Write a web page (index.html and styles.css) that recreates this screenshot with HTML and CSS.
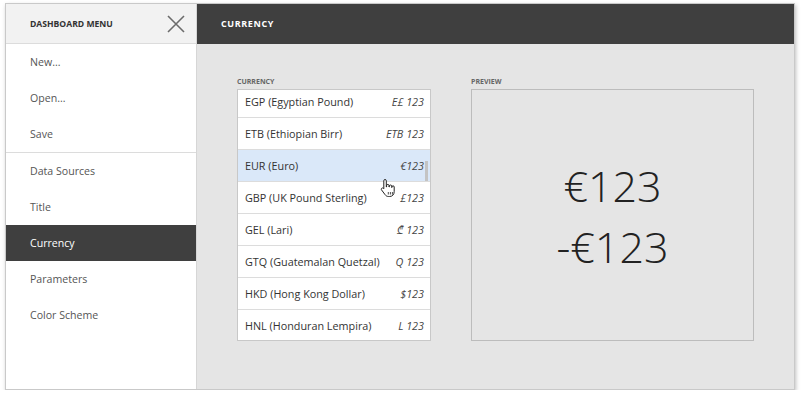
FILE: index.html
```html
<!DOCTYPE html>
<html>
<head>
<meta charset="utf-8">
<link rel="stylesheet" href="styles.css">
</head>
<body>
<div class="window">
  <aside class="sidebar">
    <div class="side-head">
      <span class="side-title">DASHBOARD MENU</span>
      <svg class="close" width="18" height="18" viewBox="0 0 18 18"><path d="M1 1L17 17M17 1L1 17" stroke="#6b6b6b" stroke-width="1.6" fill="none"/></svg>
    </div>
    <div class="group">
      <div class="item">New...</div>
      <div class="item">Open...</div>
      <div class="item">Save</div>
    </div>
    <div class="group">
      <div class="item">Data Sources</div>
      <div class="item">Title</div>
      <div class="item active">Currency</div>
      <div class="item">Parameters</div>
      <div class="item">Color Scheme</div>
    </div>
  </aside>
  <main class="main">
    <div class="main-head">CURRENCY</div>
    <div class="content">
      <section class="col">
        <div class="label">CURRENCY</div>
        <div class="listbox">
          <div class="rows">
            <div class="row"><span>EGP (Egyptian Pound)</span><i>E£ 123</i></div>
            <div class="row"><span>ETB (Ethiopian Birr)</span><i>ETB 123</i></div>
            <div class="row sel"><span>EUR (Euro)</span><i>€123</i></div>
            <div class="row"><span>GBP (UK Pound Sterling)</span><i>£123</i></div>
            <div class="row"><span>GEL (Lari)</span><i>₾ 123</i></div>
            <div class="row"><span>GTQ (Guatemalan Quetzal)</span><i>Q 123</i></div>
            <div class="row"><span>HKD (Hong Kong Dollar)</span><i>$123</i></div>
            <div class="row"><span>HNL (Honduran Lempira)</span><i>L 123</i></div>
          </div>
          <div class="thumb"></div>
          <svg class="cursor" width="16" height="20" viewBox="0 0 16 20"><path d="M5 1.5c.8 0 1.3.5 1.3 1.3V9h.3V7.6c0-.8.5-1.2 1.2-1.2s1.2.4 1.2 1.2V9h.3V8.2c0-.8.5-1.2 1.2-1.2s1.2.4 1.2 1.2V9.5h.2V9c0-.8.5-1.2 1.1-1.2.7 0 1.2.4 1.2 1.2v4.6c0 2.8-1.8 4.9-4.6 4.9H8.6c-1.6 0-2.600-.6-3.5-1.8L1.6 12c-.5-.6-.4-1.4.2-1.8.6-.4 1.3-.3 1.8.3l.2.3V2.8c0-.8.5-1.3 1.2-1.3z" fill="#fff" stroke="#222" stroke-width="1"/><path d="M8.3 14v2.5M10.4 14v2.5M12.4 14v2.5" stroke="#222" stroke-width=".8"/></svg>
        </div>
      </section>
      <section class="col">
        <div class="label">PREVIEW</div>
        <div class="preview">
          <div>€123</div>
          <div>-€123</div>
        </div>
      </section>
    </div>
  </main>
</div>
</body>
</html>
```
FILE: styles.css
```css
* { box-sizing: border-box; }
html, body { margin: 0; padding: 0; background: #fff; }
body { font-family: "Open Sans", "Noto Sans", sans-serif; }
.window {
  margin: 3px 0 0 5px;
  width: 790px;
  height: 387px;
  border: 1px solid #c9c9c9;
  box-shadow: 1px 2px 4px rgba(0,0,0,0.25);
  display: flex;
  background: #e5e5e5;
}
.sidebar {
  width: 191px;
  background: #fff;
  border-right: 1px solid #d6d6d6;
  display: flex;
  flex-direction: column;
}
.side-head {
  height: 40px;
  background: #f2f2f2;
  border-bottom: 1px solid #dcdcdc;
  display: flex;
  align-items: center;
  justify-content: space-between;
  padding: 0 11px 0 24px;
}
.side-title { font-size: 8.6px; font-weight: 700; color: #333; }
.close { display: block; }
.group { border-bottom: 1px solid #dcdcdc; }
.group:last-child { border-bottom: none; }
.item {
  height: 36px;
  line-height: 36px;
  padding-left: 24px;
  font-size: 10.6px;
  color: #555;
}
.item.active { background: #3f3f3f; color: #fff; }
.main { flex: 1; display: flex; flex-direction: column; }
.main-head {
  height: 40px;
  background: #3f3f3f;
  color: #fff;
  font-size: 9px;
  font-weight: 700;
  letter-spacing: 0.6px;
  line-height: 40px;
  padding-left: 24px;
}
.content {
  display: flex;
  gap: 40px;
  padding: 32px 0 0 40px;
}
.label {
  font-size: 7px;
  font-weight: 700;
  color: #666;
  height: 12px;
  line-height: 12px;
  margin-bottom: 1px;
}
.listbox {
  position: relative;
  width: 194px;
  height: 252px;
  background: #fff;
  border: 1px solid #c8c8c8;
  overflow: hidden;
}
.rows { margin-top: -4px; }
.row {
  height: 32px;
  border-bottom: 1px solid #dcdcdc;
  display: flex;
  align-items: center;
  justify-content: space-between;
  padding: 0 6px 0 7px;
  font-size: 10.8px;
  color: #333;
}
.row i { color: #444; }
.row.sel { background: #dae8f9; }
.thumb {
  position: absolute;
  right: 2px;
  top: 71px;
  width: 3px;
  height: 20px;
  background: #c4c4c4;
}
.cursor { position: absolute; left: 142px; top: 88px; }
.preview {
  width: 283px;
  height: 252px;
  border: 1px solid #bcbcbc;
  display: flex;
  flex-direction: column;
  align-items: center;
  justify-content: center;
  font-size: 43px;
  font-weight: 300;
  line-height: 61px;
  color: #222;
  padding-top: 2px;
}
```
